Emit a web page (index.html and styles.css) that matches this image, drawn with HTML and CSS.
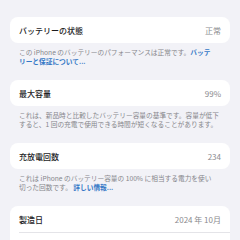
FILE: index.html
```html
<!DOCTYPE html>
<html lang="ja">
<head>
    <meta charset="UTF-8">
    <meta name="viewport" content="width=device-width, initial-scale=1.0">
    <title>バッテリーの状態</title>
    <link rel="stylesheet" href="styles.css">
</head>
<body>
    <div class="section">
        <div class="card">
            <div class="row">
                <span class="label">バッテリーの状態</span>
                <span class="value">正常</span>
            </div>
        </div>
        <div class="note">この iPhone のバッテリーのパフォーマンスは正常です。<a href="#" class="link">バッテリーと保証について...</a></div>
    </div>
    <div class="section">
        <div class="card">
            <div class="row">
                <span class="label">最大容量</span>
                <span class="value">99%</span>
            </div>
        </div>
        <div class="note">これは、新品時と比較したバッテリー容量の基準です。容量が低下すると、1 回の充電で使用できる時間が短くなることがあります。</div>
    </div>
    <div class="section">
        <div class="card">
            <div class="row">
                <span class="label">充放電回数</span>
                <span class="value">234</span>
            </div>
        </div>
        <div class="note">これは iPhone のバッテリー容量の 100% に相当する電力を使い切った回数です。 <a href="#" class="link">詳しい情報...</a></div>
    </div>
    <div class="section">
        <div class="card">
            <div class="row">
                <span class="label">製造日</span>
                <span class="value">2024 年 10月</span>
            </div>
            <div class="row">
                <span class="label">初回使用</span>
                <span class="value">2024 年 10月</span>
            </div>
        </div>
    </div>
</body>
</html>
```

FILE: styles.css
```css
body {
    font-family: "Noto Sans CJK JP", "Noto Sans", sans-serif;
    background-color: #f2f2f7;
    margin: 0;
    padding: 17px 10px 0;
}
.section {
    margin-bottom: 14px;
}
.card {
    background-color: #fff;
    border-radius: 8px;
    padding-left: 9px;
    overflow: hidden;
}
.row {
    display: flex;
    justify-content: space-between;
    align-items: center;
    height: 26px;
    padding-right: 9px;
    font-size: 8px;
}
.row + .row {
    border-top: 1px solid #e4e4e8;
}
.label {
    color: #1c1c1e;
    font-weight: 500;
}
.value {
    color: #8a8a8e;
}
.note {
    margin-top: 5px;
    padding: 0 9px;
    font-size: 6.7px;
    line-height: 9px;
    color: #86868b;
    line-break: strict;
}
.link {
    color: #3478c6;
    text-decoration: none;
    font-weight: 600;
}
```
